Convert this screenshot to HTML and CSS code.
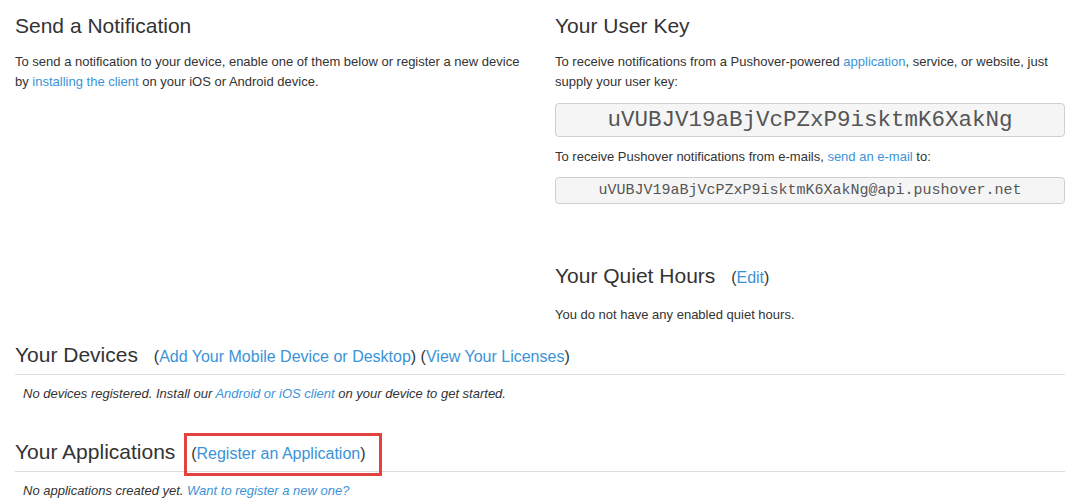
FILE: index.html
```html
<!DOCTYPE html>
<html>
<head>
<meta charset="utf-8">
<title>Pushover: Dashboard</title>
<link rel="stylesheet" href="styles.css">
</head>
<body>
<div class="page">
  <div class="cols">
    <div class="col">
      <h3>Send a Notification</h3>
      <p>To send a notification to your device, enable one of them below or register a new device by <a href="#">installing the client</a> on your iOS or Android device.</p>
    </div>
    <div class="col">
      <h3>Your User Key</h3>
      <p>To receive notifications from a Pushover-powered <a href="#">application</a>, service, or website, just supply your user key:</p>
      <div class="key">uVUBJV19aBjVcPZxP9isktmK6XakNg</div>
      <p class="near">To receive Pushover notifications from e-mails, <a href="#">send an e-mail</a> to:</p>
      <div class="key email">uVUBJV19aBjVcPZxP9isktmK6XakNg@api.pushover.net</div>

      <h3 class="quiet">Your Quiet Hours <small>(<a href="#">Edit</a>)</small></h3>
      <p class="quiet-text">You do not have any enabled quiet hours.</p>
    </div>
  </div>

  <div class="section first">
    <h3 class="section-head">Your Devices <small>(<a href="#">Add Your Mobile Device or Desktop</a>) (<a href="#">View Your Licenses</a>)</small></h3>
    <p class="empty">No devices registered. Install our <a href="#">Android or iOS client</a> on your device to get started.</p>
  </div>

  <div class="section">
    <h3 class="section-head">Your Applications <small class="marked">(<a href="#">Register an Application</a>)</small></h3>
    <p class="empty">No applications created yet. <a href="#">Want to register a new one?</a></p>
  </div>
</div>
</body>
</html>
```

FILE: styles.css
```css
body {
  margin: 0;
  background: #fff;
  color: #333;
  font-family: "Liberation Sans", Arial, Helvetica, sans-serif;
  font-size: 13px;
  line-height: 20px;
}
a {
  color: #3b93d8;
  text-decoration: none;
}
.page {
  width: 1050px;
  margin-left: 15px;
}
.cols {
  display: grid;
  grid-template-columns: 510px 510px;
  column-gap: 30px;
}
h3 {
  margin: 14px 0 0;
  font-size: 21px;
  font-weight: normal;
  line-height: 24px;
}
h3 small {
  margin-left: 10px;
  font-size: 16px;
}
p {
  margin: 14px 0 0;
}

/* user key boxes */
.key {
  box-sizing: border-box;
  height: 34px;
  margin-top: 11px;
  border: 1px solid #cfcfcf;
  border-radius: 4px;
  background: #f5f5f5;
  color: #555;
  font-family: "Liberation Mono", "Courier New", monospace;
  font-size: 22.5px;
  line-height: 32px;
  text-align: center;
}
.key.email {
  height: 27px;
  margin-top: 10px;
  font-size: 15px;
  line-height: 25px;
}
p.near {
  margin-top: 10px;
}
h3.quiet {
  margin-top: 60px;
}
p.quiet-text {
  margin-top: 15px;
}

/* full width sections */
.section.first {
  margin-top: 18px;
}
.section {
  margin-top: 36px;
}
.section-head {
  margin: 0;
  padding-bottom: 5px;
  border-bottom: 1px solid #ddd;
}
.empty {
  margin: 9px 0 0;
  padding-left: 8px;
  font-style: italic;
}

/* highlight drawn round the register link */
.marked {
  position: relative;
}
.marked::after {
  content: "";
  position: absolute;
  left: -7px;
  right: -16px;
  top: -12px;
  bottom: -14px;
  border: 3px solid #e2433f;
}
```
